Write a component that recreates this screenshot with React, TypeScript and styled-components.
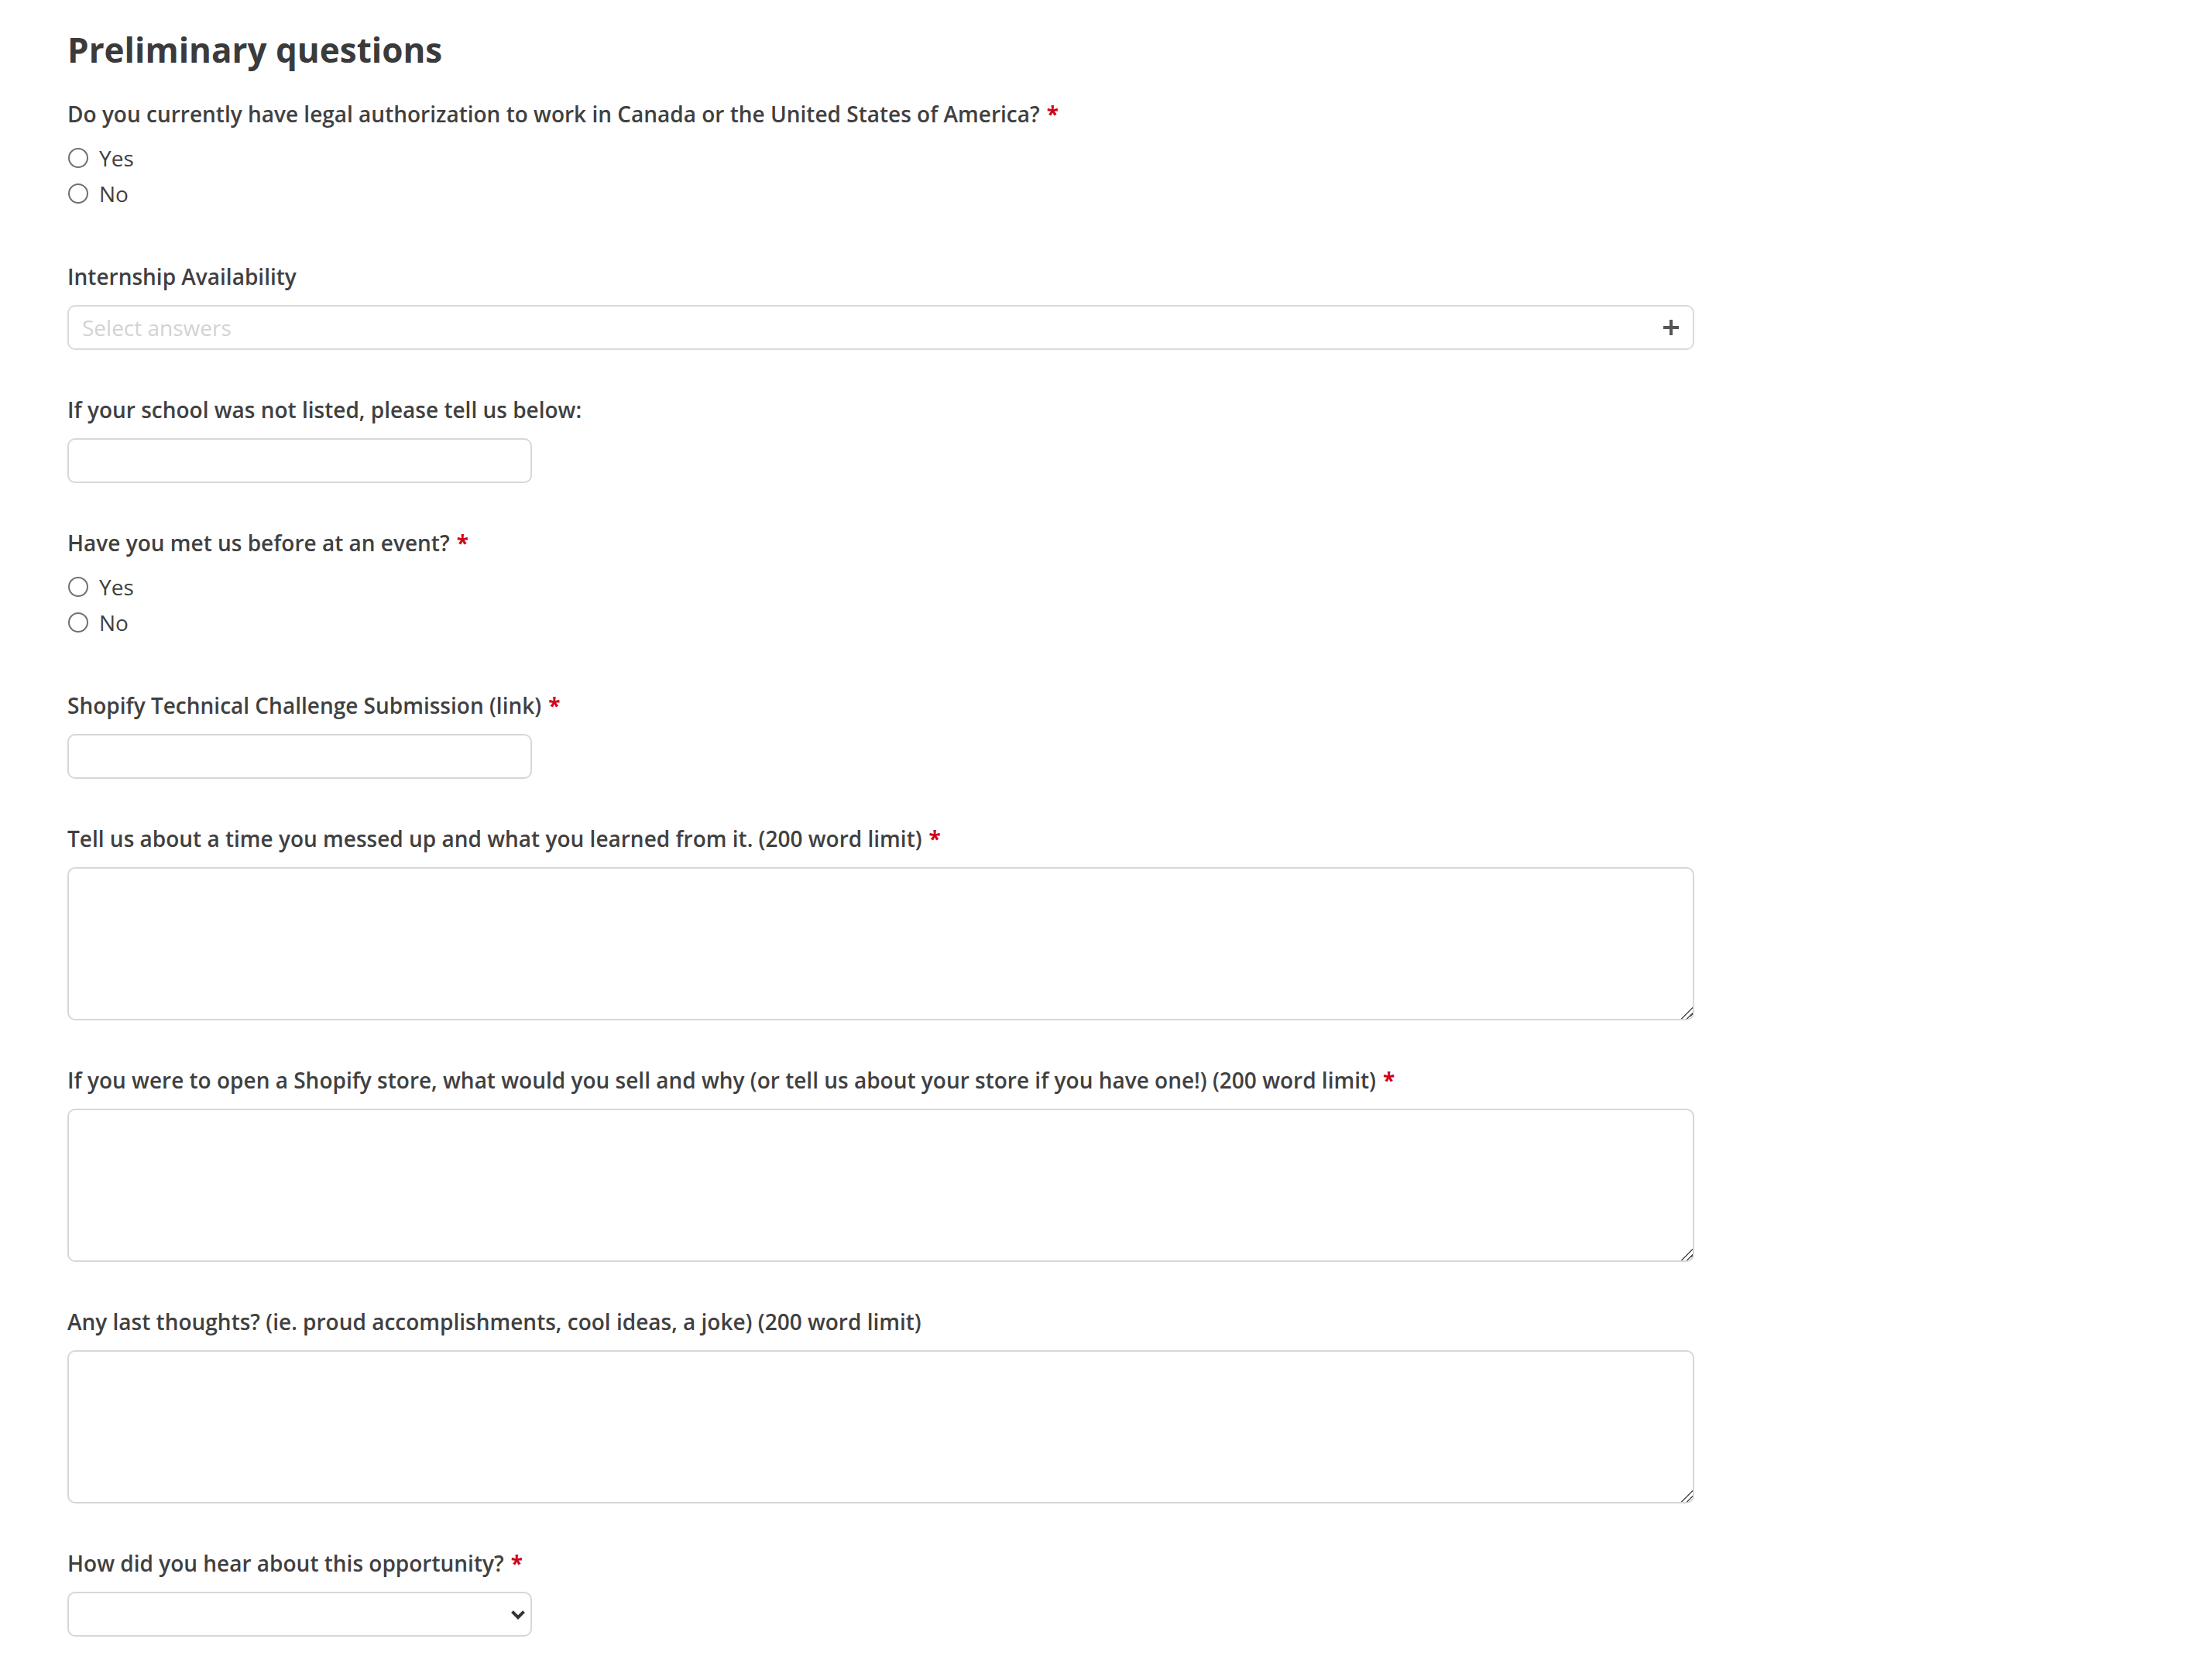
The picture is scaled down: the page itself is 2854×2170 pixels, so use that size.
import React from "react";
import styled, { createGlobalStyle } from "styled-components";

const GlobalStyle = createGlobalStyle`
  html, body { margin: 0; padding: 0; background: #ffffff; }
  body {
    font-family: "Open Sans", "Noto Sans", "Liberation Sans", sans-serif;
    color: #404040;
  }
  *, *::before, *::after { box-sizing: border-box; }
`;

const Page = styled.main`
  padding: 34px 0 60px 87px;
`;

const Form = styled.form`
  width: 2101px;
  display: flex;
  flex-direction: column;
`;

const Heading = styled.h2`
  margin: 0 0 33px;
  font-size: 44px;
  line-height: 60px;
  font-weight: 700;
  color: #3b3b3b;
`;

const Questions = styled.div`
  display: flex;
  flex-direction: column;
  gap: 57px;
`;

const Question = styled.div<{ $stretch?: boolean }>`
  display: flex;
  flex-direction: column;
  align-items: ${(p) => (p.$stretch ? "stretch" : "flex-start")};
`;

const Label = styled.label<{ $tight?: boolean }>`
  display: block;
  font-size: 28px;
  line-height: 40px;
  font-weight: 600;
  color: #404040;
  margin-bottom: ${(p) => (p.$tight ? "14px" : "17px")};
`;

const Required = styled.span`
  color: #d0021b;
  font-weight: 700;
  margin-left: 9px;
`;

const RadioList = styled.div`
  display: flex;
  flex-direction: column;
  padding-bottom: 7px;
`;

const RadioRow = styled.label`
  display: flex;
  align-items: center;
  gap: 14px;
  height: 46px;
  font-size: 28px;
  font-weight: 400;
  color: #404040;
  cursor: pointer;
`;

const Radio = styled.input.attrs({ type: "radio" })`
  appearance: none;
  -webkit-appearance: none;
  width: 26px;
  height: 26px;
  margin: -1px 0 0 1px;
  border: 2px solid #707070;
  border-radius: 50%;
  background: #ffffff;
  flex: none;
`;

const MultiSelect = styled.div`
  width: 100%;
  height: 58px;
  border: 2px solid #dadade;
  border-radius: 10px;
  display: flex;
  align-items: center;
  justify-content: space-between;
  padding: 0 18px 0 17px;
  background: #ffffff;
`;

const Placeholder = styled.span`
  font-size: 28px;
  color: #d3d3d3;
`;

const TextInput = styled.input.attrs({ type: "text" })`
  width: 600px;
  height: 58px;
  border: 2px solid #d7d7d7;
  border-radius: 10px;
  padding: 0 16px;
  font-family: inherit;
  font-size: 28px;
  color: #404040;
  outline: none;
`;

const TextArea = styled.textarea`
  display: block;
  width: 100%;
  height: 198px;
  border: 2px solid #d7d7d7;
  border-radius: 10px;
  padding: 14px 16px;
  font-family: inherit;
  font-size: 28px;
  color: #404040;
  resize: vertical;
  outline: none;

  &::-webkit-scrollbar {
    width: 18px;
    height: 18px;
  }
  &::-webkit-resizer {
    background: linear-gradient(
      135deg,
      transparent 47%,
      #555555 47%,
      #555555 55%,
      transparent 55%,
      transparent 72%,
      #555555 72%,
      #555555 80%,
      transparent 80%
    );
  }
`;

const SelectWrap = styled.div`
  position: relative;
  width: 600px;
`;

const Select = styled.select`
  appearance: none;
  -webkit-appearance: none;
  width: 100%;
  height: 58px;
  border: 2px solid #d7d7d7;
  border-radius: 10px;
  padding: 0 48px 0 16px;
  background: #ffffff;
  font-family: inherit;
  font-size: 28px;
  color: #404040;
  outline: none;
`;

const Chevron = styled.svg`
  position: absolute;
  right: 8px;
  top: 50%;
  transform: translateY(-45%);
  pointer-events: none;
`;

const PlusIcon = () => (
  <svg width="20" height="20" viewBox="0 0 20 20" aria-hidden="true">
    <path d="M10 0v20M0 10h20" stroke="#555555" strokeWidth="4" fill="none" />
  </svg>
);

type Q = { label: string; required?: boolean };

const QLabel = ({ label, required, tight }: Q & { tight?: boolean }) => (
  <Label $tight={tight}>
    {label}
    {required && <Required>*</Required>}
  </Label>
);

const RadioQuestion = ({ name, label, required }: Q & { name: string }) => (
  <Question>
    <QLabel label={label} required={required} tight />
    <RadioList>
      <RadioRow>
        <Radio name={name} value="yes" />
        Yes
      </RadioRow>
      <RadioRow>
        <Radio name={name} value="no" />
        No
      </RadioRow>
    </RadioList>
  </Question>
);

const TextQuestion = ({ label, required }: Q) => (
  <Question>
    <QLabel label={label} required={required} />
    <TextInput />
  </Question>
);

const LongQuestion = ({ label, required }: Q) => (
  <Question $stretch>
    <QLabel label={label} required={required} />
    <TextArea />
  </Question>
);

export default function App() {
  return (
    <>
      <GlobalStyle />
      <Page>
        <Form onSubmit={(e) => e.preventDefault()}>
          <Heading>Preliminary questions</Heading>
          <Questions>
            <RadioQuestion
              name="auth"
              label="Do you currently have legal authorization to work in Canada or the United States of America?"
              required
            />
            <Question $stretch>
              <QLabel label="Internship Availability" />
              <MultiSelect>
                <Placeholder>Select answers</Placeholder>
                <PlusIcon />
              </MultiSelect>
            </Question>
            <TextQuestion label="If your school was not listed, please tell us below:" />
            <RadioQuestion name="met" label="Have you met us before at an event?" required />
            <TextQuestion label="Shopify Technical Challenge Submission (link)" required />
            <LongQuestion
              label="Tell us about a time you messed up and what you learned from it. (200 word limit)"
              required
            />
            <LongQuestion
              label="If you were to open a Shopify store, what would you sell and why (or tell us about your store if you have one!) (200 word limit)"
              required
            />
            <LongQuestion label="Any last thoughts? (ie. proud accomplishments, cool ideas, a joke) (200 word limit)" />
            <Question>
              <QLabel label="How did you hear about this opportunity?" required />
              <SelectWrap>
                <Select defaultValue="">
                  <option value=""></option>
                  <option value="event">Event</option>
                  <option value="online">Online</option>
                  <option value="friend">Friend</option>
                </Select>
                <Chevron width="20" height="14" viewBox="0 0 20 14" aria-hidden="true">
                  <path d="M2.5 3l7.5 7.5L17.5 3" stroke="#333333" strokeWidth="4" fill="none" />
                </Chevron>
              </SelectWrap>
            </Question>
          </Questions>
        </Form>
      </Page>
    </>
  );
}
